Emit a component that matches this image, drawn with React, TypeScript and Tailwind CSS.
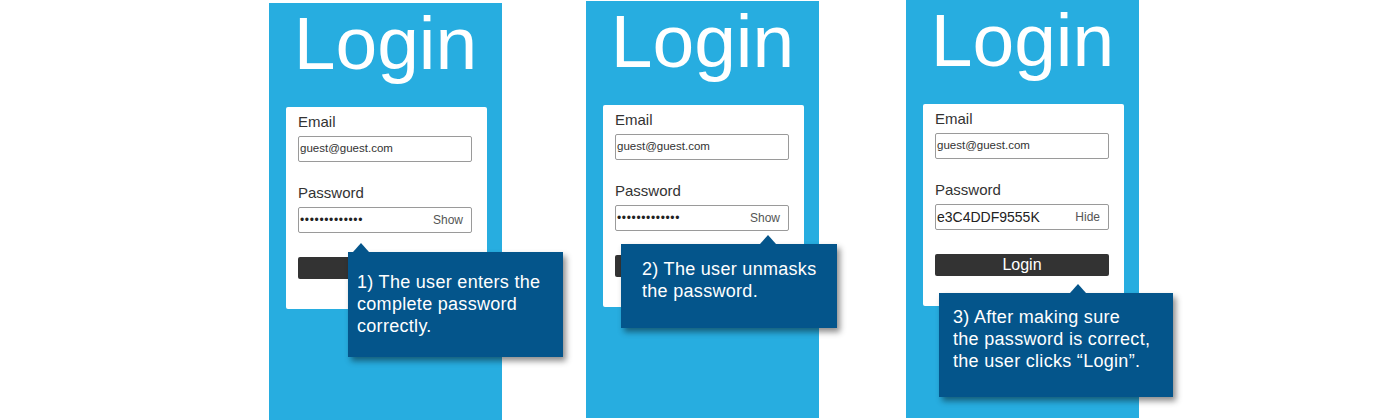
type Step = {
  top: number;
  height: number;
  password: string;
  toggle: string;
  masked: boolean;
  showButtonText: boolean;
  tip: string[];
  tipLeft: number;
  tipTop: number;
  tipWidth: number;
  tipHeight: number;
  tipPadLeft: number;
  tipPadTop: number;
  arrowX: number;
};

const steps: Step[] = [
  {
    top: 3,
    height: 417,
    password: "•••••••••••••",
    toggle: "Show",
    masked: true,
    showButtonText: false,
    tip: ["1) The user enters the", "complete password", "correctly."],
    tipLeft: 79,
    tipTop: 249,
    tipWidth: 215,
    tipHeight: 105,
    tipPadLeft: 9,
    tipPadTop: 19,
    arrowX: 13,
  },
  {
    top: 1,
    height: 417,
    password: "•••••••••••••",
    toggle: "Show",
    masked: true,
    showButtonText: false,
    tip: ["2) The user unmasks", "the password."],
    tipLeft: 35,
    tipTop: 243,
    tipWidth: 216,
    tipHeight: 84,
    tipPadLeft: 21,
    tipPadTop: 14,
    arrowX: 147,
  },
  {
    top: 0,
    height: 418,
    password: "e3C4DDF9555K",
    toggle: "Hide",
    masked: false,
    showButtonText: true,
    tip: ["3) After making sure", "the password is correct,", "the user clicks “Login”."],
    tipLeft: 33,
    tipTop: 293,
    tipWidth: 234,
    tipHeight: 104,
    tipPadLeft: 14,
    tipPadTop: 13,
    arrowX: 139,
  },
];

function Panel({ step }: { step: Step }) {
  return (
    <div
      className="relative w-[233px] shrink-0 bg-[#27ade0] flex flex-col"
      style={{ marginTop: step.top, height: step.height }}
    >
      <h1 className="pt-[3px] text-center text-[75px] leading-[75px] text-white">Login</h1>

      <div className="ml-[17px] mt-[26px] w-[201px] bg-white rounded-[2px] pl-[12px] pt-[6px] pb-[30px] flex flex-col">
        <label className="text-[15px] leading-[18px] text-[#333]">Email</label>
        <div className="mt-[5px] w-[174px] h-[26px] border border-[#9a9a9a] rounded-[2px] flex items-center pl-[1px] text-[11.5px] text-[#333]">
          guest@guest.com
        </div>

        <label className="mt-[22px] text-[15px] leading-[18px] text-[#333]">Password</label>
        <div className="mt-[5px] w-[174px] h-[26px] border border-[#9a9a9a] rounded-[2px] flex items-center justify-between pl-[1px] pr-[8px]">
          {step.masked ? (
            <span className="text-[12px] leading-none text-[#222] tracking-[0.65px]">{step.password}</span>
          ) : (
            <span className="text-[14px] text-[#222]">{step.password}</span>
          )}
          <span className="text-[12px] text-[#555]">{step.toggle}</span>
        </div>

        <div className="mt-[24px] w-[174px] h-[22px] bg-[#333] rounded-[2px] flex items-center justify-center text-[16px] text-white">
          {step.showButtonText ? "Login" : ""}
        </div>
      </div>

      <div
        className="absolute z-10 bg-[#04558b] text-white text-[18px] leading-[22px] tracking-[0.3px] shadow-[3px_4px_6px_rgba(0,0,0,0.45)]"
        style={{
          left: step.tipLeft,
          top: step.tipTop,
          width: step.tipWidth,
          height: step.tipHeight,
          paddingLeft: step.tipPadLeft,
          paddingTop: step.tipPadTop,
        }}
      >
        <div
          className="absolute top-[-9px] w-0 h-0 border-l-[8px] border-r-[8px] border-b-[9px] border-l-transparent border-r-transparent border-b-[#04558b]"
          style={{ left: step.arrowX - 8 }}
        />
        {step.tip.map((line) => (
          <div key={line} className="whitespace-nowrap">
            {line}
          </div>
        ))}
      </div>
    </div>
  );
}

export default function App() {
  return (
    <div className="w-[1400px] h-[420px] bg-white overflow-hidden flex items-start pl-[269px] font-['Liberation_Sans',Arial,sans-serif]">
      <Panel step={steps[0]} />
      <div className="w-[84px] shrink-0" />
      <Panel step={steps[1]} />
      <div className="w-[87px] shrink-0" />
      <Panel step={steps[2]} />
    </div>
  );
}
